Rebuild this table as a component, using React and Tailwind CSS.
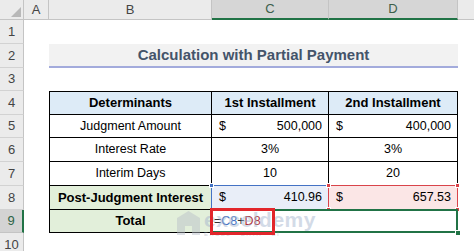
import React from 'react';

const font = "font-['Liberation_Sans',Arial,sans-serif]";

const Handle = ({ className }) => (
  <span className={`absolute w-[5px] h-[5px] border border-white ${className}`} />
);

const RowHead = ({ n, h, active }) =>
  active ? (
    <div className={`${h} w-[24px] shrink-0 flex items-center justify-center bg-[#d3d3d3] border-b border-[#c4c4c4] border-r-2 border-r-[#217346] text-[13px] text-[#2d6446]`}>
      {n}
    </div>
  ) : (
    <div className={`${h} w-[24px] shrink-0 flex items-center justify-center bg-[#ebebeb] border-b border-[#d2d2d2] border-r border-r-[#c4c4c4] text-[13px] text-[#444]`}>
      {n}
    </div>
  );

const Row = ({ n, h, active, children }) => (
  <div className={`flex ${h}`}>
    <RowHead n={n} h={h} active={active} />
    <div className="w-[25px] shrink-0" />
    {children}
    <div className="w-[16px] shrink-0" />
  </div>
);

const Money = ({ v }) => (
  <div className="flex w-full items-center justify-between pl-[7px] pr-[6px]">
    <span>$</span>
    <span>{v}</span>
  </div>
);

export default function App() {
  return (
    <div className={`${font} relative h-[251px] w-[474px] overflow-hidden bg-white text-[12.5px] text-black`}>
      {/* column headers */}
      <div className="flex h-[20px]">
        <div className="w-[24px] shrink-0 bg-[#ebebeb] border-b border-r border-[#c4c4c4]">
          <svg width="24" height="20" viewBox="0 0 24 20">
            <polygon points="21,7 21,17 11,17" fill="#b8b8b8" />
          </svg>
        </div>
        <div className="w-[25px] shrink-0 flex items-center justify-center bg-[#ebebeb] border-b border-r border-[#c4c4c4] text-[13px] text-[#444]">A</div>
        <div className="w-[163px] shrink-0 flex items-center justify-center bg-[#ebebeb] border-b border-r border-[#c4c4c4] text-[13px] text-[#444]">B</div>
        <div className="w-[117px] shrink-0 flex items-center justify-center bg-[#d6d6d6] border-r border-[#c4c4c4] border-b-2 border-b-[#217346] text-[13px] text-[#3c5f4b]">C</div>
        <div className="w-[129px] shrink-0 flex items-center justify-center bg-[#d6d6d6] border-r border-[#c4c4c4] border-b-2 border-b-[#217346] text-[13px] text-[#3c5f4b]">D</div>
        <div className="w-[16px] shrink-0 bg-[#ebebeb] border-b border-[#c4c4c4]" />
      </div>

      <Row n={1} h="h-[24px]" />

      <Row n={2} h="h-[24px]">
        <div className="w-[409px] shrink-0 flex items-center justify-center bg-[#f2f2f2] border-b-2 border-[#a3abdc] text-[15px] font-bold text-[#44546a]">
          Calculation with Partial Payment
        </div>
      </Row>

      <Row n={3} h="h-[23px]" />

      <Row n={4} h="h-[24px]">
        <div className="w-[163px] shrink-0 flex items-center justify-center bg-[#ddebf7] border border-black font-bold text-[13px]">Determinants</div>
        <div className="w-[117px] shrink-0 flex items-center justify-center bg-[#ddebf7] border-t border-r border-b border-black font-bold text-[13px]">1st Installment</div>
        <div className="w-[129px] shrink-0 flex items-center justify-center bg-[#ddebf7] border-t border-r border-b border-black font-bold text-[13px]">2nd Installment</div>
      </Row>

      <Row n={5} h="h-[23px]">
        <div className="w-[163px] shrink-0 flex items-center justify-center border-l border-r border-b border-black">Judgment Amount</div>
        <div className="w-[117px] shrink-0 flex items-center border-r border-b border-black"><Money v="500,000" /></div>
        <div className="w-[129px] shrink-0 flex items-center border-r border-b border-black"><Money v="400,000" /></div>
      </Row>

      <Row n={6} h="h-[24px]">
        <div className="w-[163px] shrink-0 flex items-center justify-center border-l border-r border-b border-black">Interest Rate</div>
        <div className="w-[117px] shrink-0 flex items-center justify-center border-r border-b border-black">3%</div>
        <div className="w-[129px] shrink-0 flex items-center justify-center border-r border-b border-black">3%</div>
      </Row>

      <Row n={7} h="h-[24px]">
        <div className="w-[163px] shrink-0 flex items-center justify-center border-l border-r border-b border-black">Interim Days</div>
        <div className="w-[117px] shrink-0 flex items-center justify-center border-r border-b border-black">10</div>
        <div className="w-[129px] shrink-0 flex items-center justify-center border-r border-b border-black">20</div>
      </Row>

      <Row n={8} h="h-[24px]">
        <div className="w-[163px] shrink-0 flex items-center justify-center bg-[#e2efda] border-l border-r border-b border-black font-bold text-[13px]">Post-Judgment Interest</div>
        <div className="relative w-[117px] shrink-0 flex items-center bg-[#e9eef8] border-r border-b border-black">
          <Money v="410.96" />
          <span className="absolute -left-px -top-px -right-px -bottom-px border border-[#4472c4]" />
          <Handle className="-left-[3px] -top-[3px] bg-[#4472c4]" />
        </div>
        <div className="relative w-[129px] shrink-0 flex items-center bg-[#fbe6e6] border-r border-b border-black">
          <Money v="657.53" />
          <span className="absolute -left-px -top-px -right-px -bottom-px border border-[#d9444a]" />
          <Handle className="-left-[3px] -top-[3px] bg-[#d9444a]" />
          <Handle className="-right-[3px] -top-[3px] bg-[#d9444a]" />
          <Handle className="-left-[3px] -bottom-[3px] bg-[#d9444a]" />
          <Handle className="-right-[3px] -bottom-[3px] bg-[#d9444a]" />
        </div>
      </Row>

      <Row n={9} h="h-[23px]" active>
        <div className="w-[163px] shrink-0 flex items-center justify-center bg-[#e2efda] border-l border-r border-b border-black font-bold text-[13px]">Total</div>
        <div className="relative w-[246px] shrink-0 flex items-center pl-[2px] border-r border-b border-black">
          <span>
            <span className="text-[#333]">=</span>
            <span className="text-[#4472c4]">C8</span>
            <span className="text-[#333]">+</span>
            <span className="text-[#b2343a]">D8</span>
          </span>
          <span className="absolute -left-px -top-px -right-px -bottom-px border-2 border-[#217346]" />
          <span className="absolute -right-[4px] -bottom-[4px] w-[6px] h-[6px] bg-[#217346] border border-white" />
        </div>
      </Row>

      <Row n={10} h="h-[24px]" />

      {/* watermark */}
      <div className="pointer-events-none absolute left-[176px] top-[209px] flex items-center gap-[3px] opacity-45">
        <svg width="25" height="26" viewBox="0 0 25 26">
          <path d="M12.5 1 L24 8 V25 H16 V16 H9 V25 H1 V8 Z" fill="#b8bec8" />
        </svg>
        <div className="flex flex-col leading-none">
          <span className="text-[21px] font-bold tracking-[0.5px] text-[#9fb0cc]">exceldemy</span>
          <span className="mt-[1px] text-[6px] tracking-[1.5px] text-[#9aa4b4]">EXCEL · DATA · BI</span>
        </div>
      </div>

      {/* annotation box */}
      <div className="pointer-events-none absolute left-[210px] top-[208px] w-[65px] h-[27px] border-[3px] border-[#e2262b]" />
    </div>
  );
}
